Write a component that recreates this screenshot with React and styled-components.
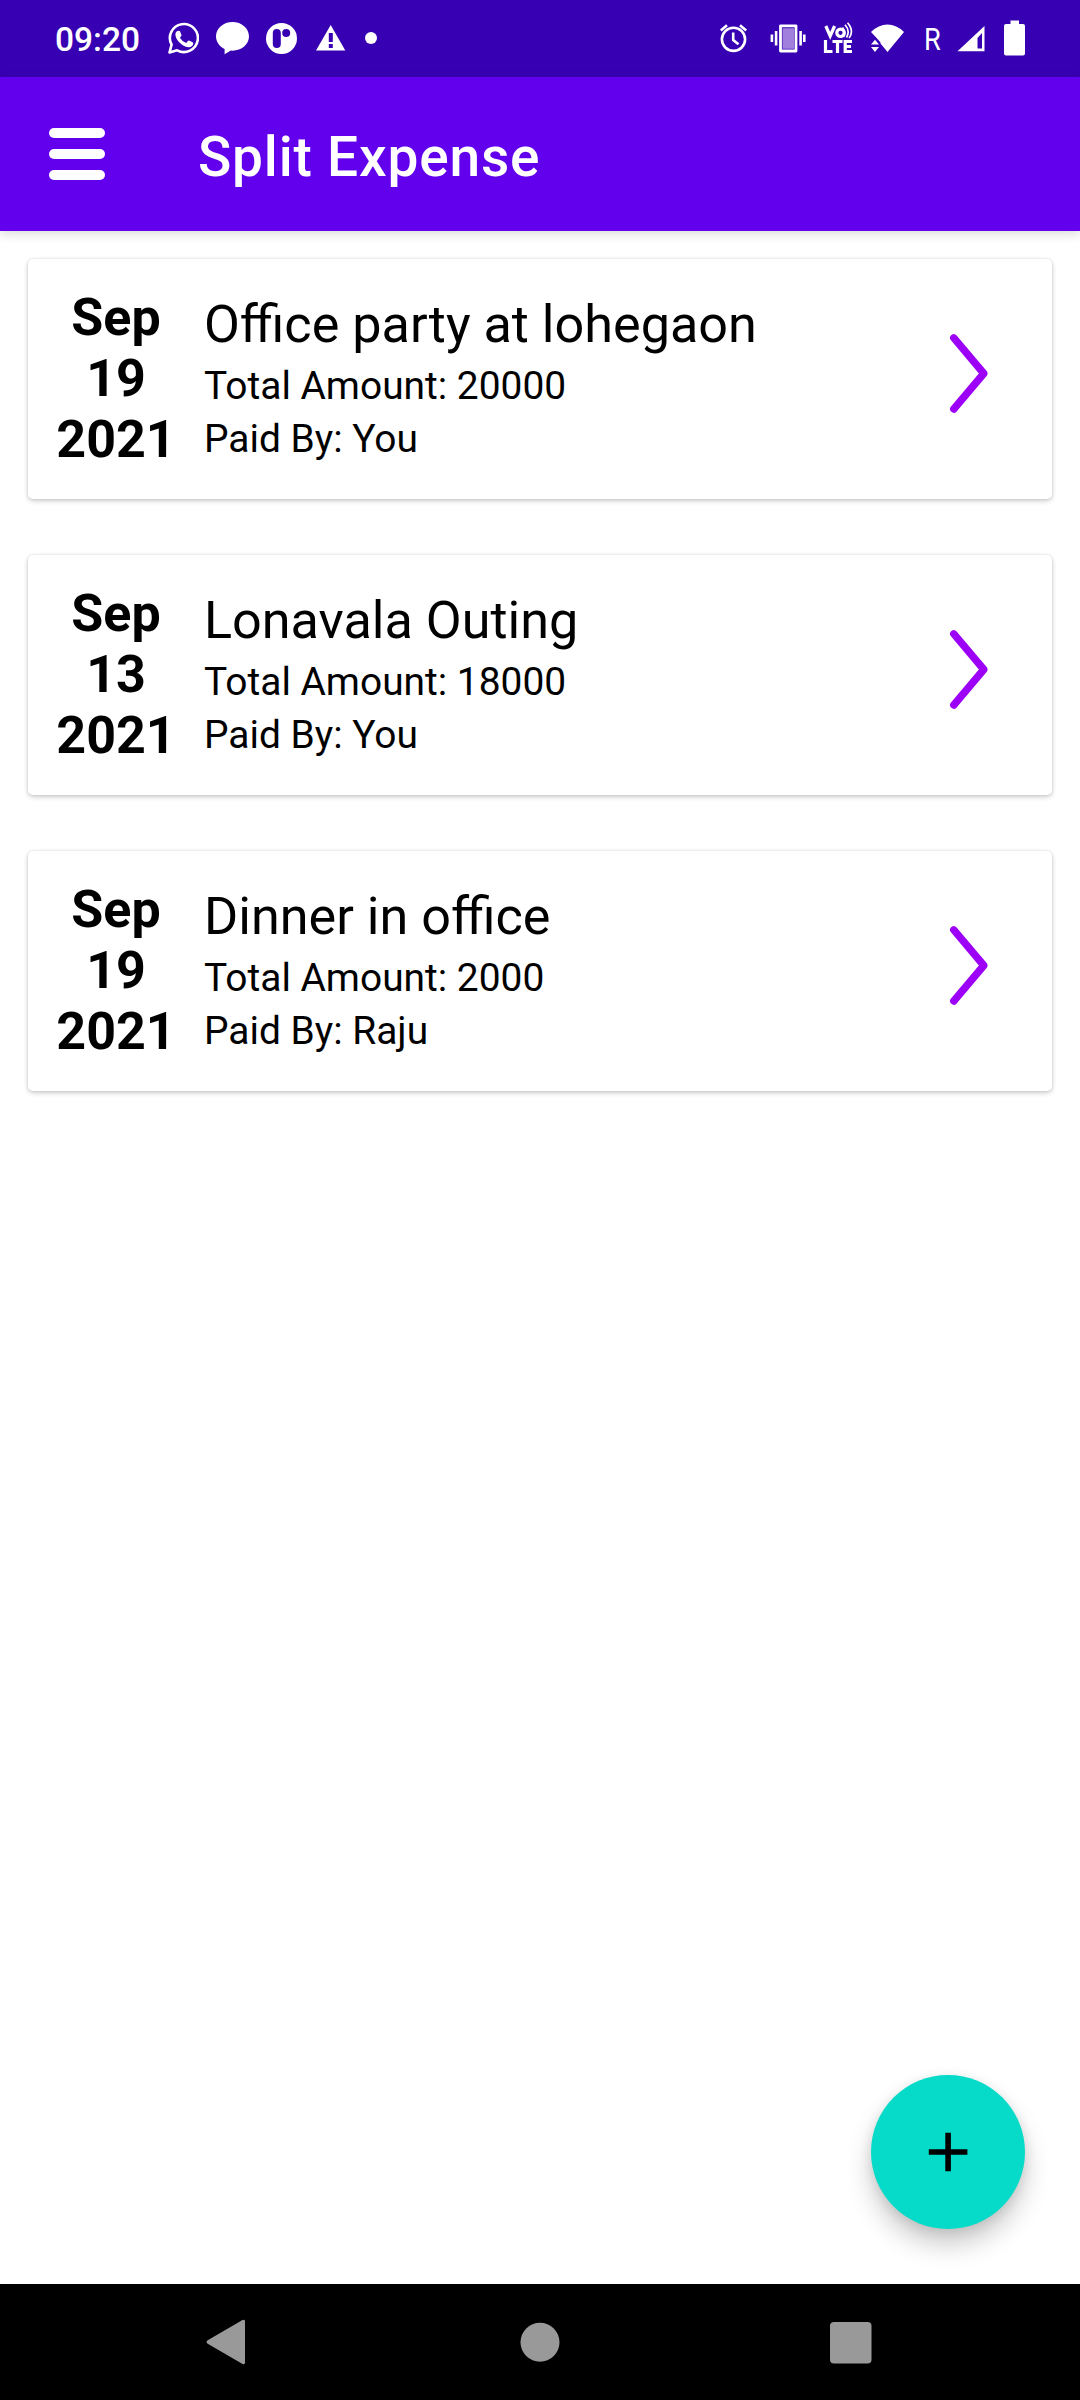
import React from "react";
import styled, { createGlobalStyle } from "styled-components";

const Global = createGlobalStyle`
  *, *::before, *::after { box-sizing: border-box; }
  html, body { margin: 0; padding: 0; background: #fff; }
  body { font-family: Roboto, "Liberation Sans", sans-serif; color: #000; }
`;

const Screen = styled.div`
  display: flex;
  flex-direction: column;
  width: 1080px;
  height: 2400px;
  background: #fff;
  overflow: hidden;
`;

const StatusBar = styled.header`
  flex: none;
  display: flex;
  align-items: flex-start;
  height: 77px;
  padding: 0 55px;
  background: #3700b3;
  color: #fff;
`;

const Clock = styled.span`
  width: 113px;
  padding-top: 20px;
  font-size: 33.5px;
  font-weight: 500;
  line-height: 40px;
`;

const Spacer = styled.div`
  flex: 1;
`;

const StatusIcon = styled.svg`
  flex: none;
  display: block;
  width: ${(p) => p.$w}px;
  height: 77px;
  margin-left: ${(p) => p.$gap || 0}px;
  fill: #fff;
`;

const Roaming = styled.span`
  width: 17px;
  margin-left: 20px;
  padding-top: 18px;
  font-size: 32px;
  line-height: 42px;
  transform: scaleX(0.85);
  transform-origin: 0 0;
`;

const AppBar = styled.div`
  flex: none;
  position: relative;
  display: flex;
  align-items: center;
  height: 154px;
  padding-left: 49px;
  background: #6200ee;
  color: #fff;
  box-shadow: 0 3px 10px rgba(0, 0, 0, 0.14);
`;

const MenuButton = styled.button`
  display: flex;
  flex-direction: column;
  gap: 11px;
  width: 56px;
  margin: 0 93px 0 0;
  padding: 0;
  border: 0;
  background: none;
`;

const MenuLine = styled.span`
  height: 10px;
  border-radius: 5px;
  background: #fff;
`;

const AppTitle = styled.h1`
  margin: 5px 0 0;
  font-size: 55px;
  font-weight: 500;
  line-height: 64px;
  letter-spacing: 0.0148em;
`;

const Content = styled.main`
  flex: 1;
  display: flex;
  flex-direction: column;
  gap: 56px;
  padding: 28px 28px 55px;
`;

const Card = styled.article`
  flex: none;
  display: flex;
  height: 240px;
  padding: 28px;
  border-radius: 5px;
  background: #fff;
  box-shadow: 0 2px 5px rgba(0, 0, 0, 0.2), 0 0 3px rgba(0, 0, 0, 0.1);
`;

const DateBlock = styled.div`
  width: 120px;
  margin-right: 28px;
  font-size: 52px;
  font-weight: 700;
  line-height: 61px;
  text-align: center;
`;

const Details = styled.div`
  flex: 1;
  padding-top: 7px;
`;

const ExpenseName = styled.h2`
  margin: 0 0 4px;
  font-size: 52.15px;
  font-weight: 400;
  line-height: 61px;
`;

const DetailLine = styled.p`
  margin: 0;
  font-size: 38.9px;
  line-height: 53px;
`;

const Chevron = styled.svg`
  width: 42px;
  height: 82px;
  margin: 46px 33px 0 0;
  fill: none;
  stroke: #9c00f8;
  stroke-width: 7.4;
  stroke-linecap: round;
  stroke-linejoin: round;
`;

const AddButton = styled.button`
  flex: none;
  display: flex;
  align-items: center;
  justify-content: center;
  width: 154px;
  height: 154px;
  margin: auto 27px 0 auto;
  padding: 0;
  border: 0;
  border-radius: 50%;
  background: #05dbc8;
  box-shadow: 0 16px 26px rgba(0, 0, 0, 0.2), 0 3px 12px rgba(0, 0, 0, 0.1);
`;

const NavBar = styled.nav`
  flex: none;
  display: flex;
  align-items: center;
  justify-content: space-between;
  height: 116px;
  padding: 0 207px 0 205px;
  background: #000;
`;

const NavIcon = styled.svg`
  display: block;
  width: 44px;
  height: 48px;
  fill: #999;
`;

const expenses = [
  { month: "Sep", day: "19", year: "2021", name: "Office party at lohegaon", amount: 20000, payer: "You" },
  { month: "Sep", day: "13", year: "2021", name: "Lonavala Outing", amount: 18000, payer: "You" },
  { month: "Sep", day: "19", year: "2021", name: "Dinner in office", amount: 2000, payer: "Raju" },
];

function NotificationIcons() {
  return (
    <>
      <StatusIcon $w={31} viewBox="168 0 31 77">
        <path
          d="M169.5 52.5l2.1-7.8a14 14 0 1 1 5.6 5.6z"
          fill="none"
          stroke="#fff"
          strokeWidth="2.6"
          strokeLinejoin="round"
        />
        <path d="M176.5 31.5l2-.8q1.200-.2 1.700 1l1.200 3q.3 1-.5 1.900l-1 1.200q2.300 3.800 6.300 5.300l1.700-2q.7-.8 1.700-.3l3 1.500q.9.500.7 1.500c-.5 2.400-2.600 3.600-4.900 3.400-6.500-.8-12.800-7.500-13-12.500 0-1.400.4-2.400 1.100-3.200z" />
      </StatusIcon>
      <StatusIcon $w={33} $gap={17} viewBox="216 0 33 77">
        <path d="M232.500 22c9.200 0 16.500 6.300 16.500 14.300s-7.300 14.400-16.500 14.400l-1.700-.1-6.200 3.600v-5.200c-5.200-2.400-8.600-7.200-8.600-12.700 0-8 7.300-14.300 16.500-14.300z" />
      </StatusIcon>
      <StatusIcon $w={31} $gap={17} viewBox="266 0 31 77">
        <path
          fillRule="evenodd"
          d="M281.500 23a15.500 15.500 0 1 1 0 31 15.500 15.500 0 0 1 0-31zM276.800 29a4 4 0 0 0-4 4v11a4 4 0 0 0 8 0V33a4 4 0 0 0-4-4zM286.200 29a4 4 0 1 0 0 8 4 4 0 0 0 0-8z"
        />
      </StatusIcon>
      <StatusIcon $w={30} $gap={19} viewBox="316 0 30 77">
        <path
          fillRule="evenodd"
          d="M330.700 25l14.600 25.500h-29.300zM328.800 33v9h4v-9zM328.800 44v4h4v-4z"
        />
      </StatusIcon>
      <StatusIcon $w={12} $gap={19} viewBox="365 0 12 77">
        <circle cx="371" cy="38" r="6" />
      </StatusIcon>
    </>
  );
}

function SystemIcons() {
  return (
    <>
      <StatusIcon $w={28} viewBox="720 0 28 77">
        <g fill="none" stroke="#fff">
          <circle cx="733.500" cy="39.300" r="11.600" strokeWidth="2.600" />
          <path d="M733.200 32.500v7.500l5.300 4.200M720.800 30.500l6.200-5.200M746.200 30.500l-6.200-5.200" strokeWidth="2.600" />
        </g>
      </StatusIcon>
      <StatusIcon $w={36} $gap={22} viewBox="770 0 36 77">
        <path d="M782.500 28.200h11.500v20.600h-11.500z" fill="#a080dc" />
        <path
          d="M780.500 25.800h15.500v25.200h-15.500z"
          fill="none"
          stroke="#fff"
          strokeWidth="2.800"
          strokeLinejoin="round"
        />
        <path d="M774.800 31h2.600v14.500h-2.600zM770.600 34.500h2.600v7.500h-2.600zM799.300 31h2.600v14.500h-2.600zM803 34.500h2.600v7.500h-2.600z" />
      </StatusIcon>
      <StatusIcon $w={30} $gap={17} viewBox="823 0 30 77">
        <g fill="none" stroke="#fff" strokeWidth="3.200">
          <path d="M825.800 26l4.400 10 4.400-10" />
          <circle cx="840.500" cy="32.800" r="3.700" />
          <path d="M842.500 27.500q4 5 1 9.500M845 24.800q5.500 6.200 1.500 12.700M847.500 22.700q7 8 1.600 15.300" strokeWidth="1.700" />
          <path d="M825.500 40v11.500h7M832.500 41.500h10M837.500 41.500v11.500M852 41.500h-6.800v10h6.800M845.500 46.500h5.500" />
        </g>
      </StatusIcon>
      <StatusIcon $w={33} $gap={18} viewBox="871 0 33 77">
        <path d="M871 32q7.500-7.500 16.500-7.500t16.500 7.500l-16.500 20-7-8.500v-1l-4.300-5z" />
        <path
          d="M871 44.500l4-4.700 4 4.700zM871 47h8l-4 5z"
          stroke="#3700b3"
          strokeWidth="1.500"
          paintOrder="stroke"
        />
      </StatusIcon>
      <Roaming>R</Roaming>
      <StatusIcon $w={28} $gap={16} viewBox="957 0 28 77">
        <path fillRule="evenodd" d="M984.500 26v25.300H957.500zM982 33l-4.500 5v10.500h4.500z" />
      </StatusIcon>
      <StatusIcon $w={21} $gap={19} viewBox="1004 0 21 77">
        <path d="M1010.500 20.500h8.500v3.500h4a2 2 0 0 1 2 2v27.500a2 2 0 0 1-2 2h-17a2 2 0 0 1-2-2V26a2 2 0 0 1 2-2h4.500z" />
      </StatusIcon>
    </>
  );
}

function ExpenseCard({ month, day, year, name, amount, payer }) {
  return (
    <Card>
      <DateBlock>
        <div>{month}</div>
        <div>{day}</div>
        <div>{year}</div>
      </DateBlock>
      <Details>
        <ExpenseName>{name}</ExpenseName>
        <DetailLine>Total Amount: {amount}</DetailLine>
        <DetailLine>Paid By: {payer}</DetailLine>
      </Details>
      <Chevron viewBox="0 0 42 82">
        <path d="M4.800 4.800L34.800 40.500L4.800 76" />
      </Chevron>
    </Card>
  );
}

export default function App() {
  return (
    <Screen>
      <Global />
      <StatusBar>
        <Clock>09:20</Clock>
        <NotificationIcons />
        <Spacer />
        <SystemIcons />
      </StatusBar>
      <AppBar>
        <MenuButton aria-label="Menu">
          <MenuLine />
          <MenuLine />
          <MenuLine />
        </MenuButton>
        <AppTitle>Split Expense</AppTitle>
      </AppBar>
      <Content>
        {expenses.map((e, i) => (
          <ExpenseCard key={i} {...e} />
        ))}
        <AddButton aria-label="Add expense">
          <svg width="40" height="40" viewBox="0 0 40 40">
            <path d="M17.300 .7h5.600v16.500h16.500v5.600H22.900v16.500h-5.600V22.800H.8v-5.600h16.500z" />
          </svg>
        </AddButton>
      </Content>
      <NavBar>
        <NavIcon viewBox="0 0 44 48">
          <path d="M2.300 22.500L37.500 2q2.500-1 2.500 1.500v41q0 2.500-2.500 1.500L2.300 25.500q-1.800-1.500 0-3z" />
        </NavIcon>
        <NavIcon viewBox="0 0 44 48">
          <circle cx="23" cy="24.300" r="19.500" />
        </NavIcon>
        <NavIcon viewBox="0 0 44 48">
          <rect x="1" y="4" width="41.500" height="41.500" rx="4" />
        </NavIcon>
      </NavBar>
    </Screen>
  );
}
